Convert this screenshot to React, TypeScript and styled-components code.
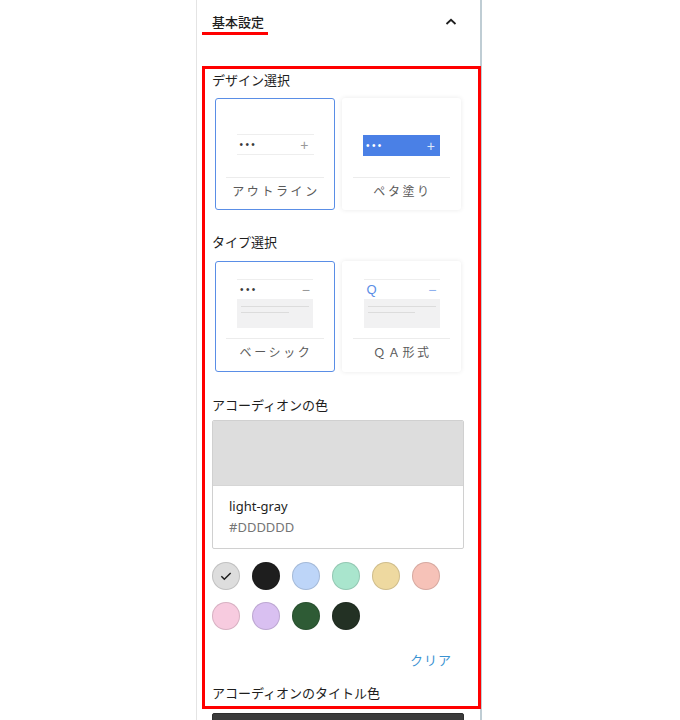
import styled, { createGlobalStyle } from 'styled-components';

const GlobalStyle = createGlobalStyle`
  html, body {
    margin: 0;
    padding: 0;
    background: #fff;
  }
  body {
    font-family: "Noto Sans", "Noto Sans CJK JP", sans-serif;
    color: #1e1e1e;
  }
  * {
    box-sizing: border-box;
  }
`;

const Page = styled.div`
  width: 680px;
  height: 720px;
  overflow: hidden;
  padding-left: 196px;
`;

const Sidebar = styled.div`
  width: 286px;
  height: 720px;
  border-left: 1px solid #e4e4e4;
  border-right: 2px solid #bfcdd4;
  padding: 0 16px 0 15px;
`;

const PanelHeader = styled.div`
  height: 44px;
  display: flex;
  align-items: center;
  justify-content: space-between;
`;

const PanelTitle = styled.span`
  position: relative;
  font-size: 13px;
  font-weight: 500;
  line-height: 16px;
  color: #1e1e1e;

  &::after {
    content: '';
    position: absolute;
    left: -10px;
    right: -4px;
    bottom: -5px;
    height: 3px;
    background: #ff0000;
  }
`;

const Chevron = styled.svg`
  width: 24px;
  height: 24px;
  margin-right: 1px;
`;

const Highlight = styled.section`
  position: relative;
  margin-top: 28px;

  &::before {
    content: '';
    position: absolute;
    top: -6px;
    left: -10px;
    right: -17px;
    bottom: -8px;
    border: 3px solid #ff0000;
    pointer-events: none;
  }
`;

const FieldLabel = styled.div<{ $gap?: number }>`
  font-size: 13px;
  line-height: 16px;
  color: #1e1e1e;
  margin-top: ${(p) => p.$gap ?? 0}px;
`;

const CardGrid = styled.div<{ $gap: number }>`
  display: grid;
  grid-template-columns: 120px 119px;
  gap: 7px;
  padding-left: 3px;
  margin-top: ${(p) => p.$gap}px;
`;

const Card = styled.div<{ $selected?: boolean; $h: number }>`
  height: ${(p) => p.$h}px;
  border-radius: 3px;
  background: #fff;
  border: 1.5px solid ${(p) => (p.$selected ? '#5a8ee6' : 'transparent')};
  box-shadow: ${(p) => (p.$selected ? 'none' : '0 0 5px rgba(0, 0, 0, 0.09)')};
  display: flex;
  flex-direction: column;
  align-items: center;
  padding: 0 10px;
`;

const Preview = styled.div<{ $h: number; $top: number }>`
  width: 100%;
  height: ${(p) => p.$h}px;
  padding-top: ${(p) => p.$top}px;
  border-bottom: 1px solid #ececec;
  display: flex;
  flex-direction: column;
  align-items: center;
`;

const BarRow = styled.div<{ $filled?: boolean }>`
  width: 77px;
  height: 21px;
  display: flex;
  align-items: center;
  justify-content: space-between;
  padding: 0 5px 0 3px;
  background: ${(p) => (p.$filled ? '#4a80e6' : 'transparent')};
  border-top: 1px solid ${(p) => (p.$filled ? '#4a80e6' : '#eeeeee')};
  border-bottom: 1px solid ${(p) => (p.$filled ? '#4a80e6' : '#eeeeee')};
`;

const TypeRow = styled.div`
  width: 76px;
  height: 20px;
  display: flex;
  align-items: center;
  justify-content: space-between;
  padding: 0 3px;
  border-top: 1px solid #eeeeee;
`;

const Dots = styled.span<{ $light?: boolean }>`
  font-family: "Liberation Sans", sans-serif;
  font-size: 10px;
  letter-spacing: 2.4px;
  line-height: 10px;
  color: ${(p) => (p.$light ? '#ffffff' : '#3a3a3a')};
`;

const Mark = styled.span<{ $color: string }>`
  font-family: "Liberation Sans", sans-serif;
  font-size: 14px;
  line-height: 12px;
  color: ${(p) => p.$color};
`;

const QMark = styled.span`
  font-family: "Liberation Sans", sans-serif;
  font-size: 13px;
  line-height: 12px;
  color: #5a8ee6;
`;

const ContentBox = styled.div`
  width: 76px;
  height: 29px;
  background: #f1f1f2;
  padding: 7px 4px 0;
  display: flex;
  flex-direction: column;
  gap: 5px;
`;

const TextLine = styled.div<{ $w: string }>`
  height: 1px;
  width: ${(p) => p.$w};
  background: #dcdcdc;
`;

const CardLabel = styled.div`
  flex: 1;
  display: flex;
  align-items: center;
  padding: 0 0 6px 2px;
  font-size: 12px;
  letter-spacing: 2.6px;
  color: #5a5a5a;
`;

const ColorBox = styled.div`
  margin-top: 7px;
  border: 1px solid #d0d0d0;
  border-radius: 2px;
  overflow: hidden;
`;

const ColorFill = styled.div<{ $color: string }>`
  height: 65px;
  background: ${(p) => p.$color};
  border-bottom: 1px solid #d6d6d6;
`;

const ColorInfo = styled.div`
  height: 62px;
  padding: 12px 16px 0;
  display: flex;
  flex-direction: column;
  gap: 4px;
`;

const ColorName = styled.div`
  font-size: 13px;
  line-height: 17px;
  color: #1e1e1e;
`;

const ColorHex = styled.div`
  font-size: 13px;
  line-height: 17px;
  color: #757575;
`;

const Swatches = styled.div`
  margin-top: 13px;
  display: grid;
  grid-template-columns: repeat(6, 28px);
  column-gap: 12px;
  row-gap: 12px;
`;

const Swatch = styled.button<{ $color: string }>`
  width: 28px;
  height: 28px;
  border-radius: 50%;
  border: none;
  padding: 0;
  background: ${(p) => p.$color};
  box-shadow: inset 0 0 0 1px rgba(0, 0, 0, 0.13);
  display: flex;
  align-items: center;
  justify-content: center;
`;

const ClearRow = styled.div`
  margin-top: 22px;
  display: flex;
  justify-content: flex-end;
  padding-right: 12px;
`;

const ClearButton = styled.button`
  background: none;
  border: none;
  padding: 0;
  font-family: inherit;
  font-size: 13px;
  line-height: 16px;
  letter-spacing: 1px;
  color: #3a92d2;
`;

const DarkFill = styled.div`
  margin-top: 12px;
  height: 60px;
  background: #3b3b3b;
  border: 1px solid #2e2e2e;
  border-radius: 2px;
`;

const swatchColors = [
  '#dddddd',
  '#1e1e1e',
  '#bdd5f8',
  '#a9e5cd',
  '#eed9a0',
  '#f6c2b8',
  '#f7cbdf',
  '#d9c0f1',
  '#2e5b35',
  '#233124',
];

const App = () => {
  return (
    <>
      <GlobalStyle />
      <Page>
        <Sidebar>
          <PanelHeader>
            <PanelTitle>基本設定</PanelTitle>
            <Chevron viewBox="0 0 24 24" fill="none">
              <path d="M7.5 14l4.5-4.2 4.5 4.2" stroke="#1e1e1e" strokeWidth="1.8" />
            </Chevron>
          </PanelHeader>

          <Highlight>
            <FieldLabel>デザイン選択</FieldLabel>
            <CardGrid $gap={10}>
              <Card $selected $h={112}>
                <Preview $h={79} $top={35}>
                  <BarRow>
                    <Dots>•••</Dots>
                    <Mark $color="#999">+</Mark>
                  </BarRow>
                </Preview>
                <CardLabel>アウトライン</CardLabel>
              </Card>
              <Card $h={112}>
                <Preview $h={79} $top={36}>
                  <BarRow $filled>
                    <Dots $light>•••</Dots>
                    <Mark $color="#dfe9fb">+</Mark>
                  </BarRow>
                </Preview>
                <CardLabel>ペタ塗り</CardLabel>
              </Card>
            </CardGrid>

            <FieldLabel $gap={24}>タイプ選択</FieldLabel>
            <CardGrid $gap={11}>
              <Card $selected $h={111}>
                <Preview $h={77} $top={17}>
                  <TypeRow>
                    <Dots>•••</Dots>
                    <Mark $color="#999">−</Mark>
                  </TypeRow>
                  <ContentBox>
                    <TextLine $w="100%" />
                    <TextLine $w="70%" />
                  </ContentBox>
                </Preview>
                <CardLabel>ベーシック</CardLabel>
              </Card>
              <Card $h={111}>
                <Preview $h={77} $top={17}>
                  <TypeRow>
                    <QMark>Q</QMark>
                    <Mark $color="#8fb0ee">−</Mark>
                  </TypeRow>
                  <ContentBox>
                    <TextLine $w="100%" />
                    <TextLine $w="70%" />
                  </ContentBox>
                </Preview>
                <CardLabel>ＱＡ形式</CardLabel>
              </Card>
            </CardGrid>

            <FieldLabel $gap={25}>アコーディオンの色</FieldLabel>
            <ColorBox>
              <ColorFill $color="#dddddd" />
              <ColorInfo>
                <ColorName>light-gray</ColorName>
                <ColorHex>#DDDDDD</ColorHex>
              </ColorInfo>
            </ColorBox>

            <Swatches>
              {swatchColors.map((c, i) => (
                <Swatch key={c} $color={c} aria-label={c}>
                  {i === 0 && (
                    <svg width="16" height="16" viewBox="0 0 24 24" fill="none">
                      <path d="M5 12.5l4.5 4.5L19 7.5" stroke="#1e1e1e" strokeWidth="2.2" />
                    </svg>
                  )}
                </Swatch>
              ))}
            </Swatches>

            <ClearRow>
              <ClearButton>クリア</ClearButton>
            </ClearRow>

            <FieldLabel $gap={17}>アコーディオンのタイトル色</FieldLabel>
          </Highlight>
          <DarkFill />
        </Sidebar>
      </Page>
    </>
  );
};

export default App;
